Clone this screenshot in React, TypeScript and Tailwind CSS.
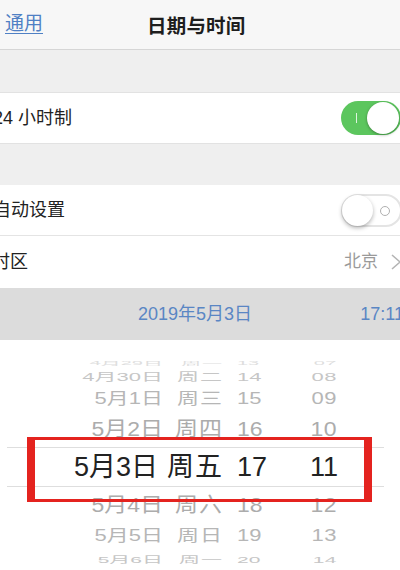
import React from "react";

const font = { fontFamily: '"Liberation Sans", "Noto Sans CJK SC", sans-serif' };

type WheelRow = {
  date: string;
  week: string;
  hour: string;
  min: string;
  h: string;
  text: string;
  squash: string;
};

const rows: WheelRow[] = [
  { date: "4月29日", week: "周一", hour: "13", min: "07", h: "h-[8px]", text: "text-[20px] text-[#dedede]", squash: "scale-y-[0.25]" },
  { date: "4月30日", week: "周二", hour: "14", min: "08", h: "h-[20px]", text: "text-[22px] text-[#c6c6c6]", squash: "scale-y-[0.5]" },
  { date: "5月1日", week: "周三", hour: "15", min: "09", h: "h-[24px]", text: "text-[22px] text-[#b6b6b6]", squash: "scale-y-[0.72]" },
  { date: "5月2日", week: "周四", hour: "16", min: "10", h: "h-[36px]", text: "text-[23px] text-[#acacac]", squash: "scale-y-[0.9]" },
];

const rowsBelow: WheelRow[] = [
  { date: "5月4日", week: "周六", hour: "18", min: "12", h: "h-[36px]", text: "text-[23px] text-[#acacac]", squash: "scale-y-[0.9]" },
  { date: "5月5日", week: "周日", hour: "19", min: "13", h: "h-[26px]", text: "text-[22px] text-[#b6b6b6]", squash: "scale-y-[0.72]" },
  { date: "5月6日", week: "周一", hour: "20", min: "14", h: "h-[20px]", text: "text-[21px] text-[#c6c6c6]", squash: "scale-y-[0.45]" },
];

const Row = ({ r }: { r: WheelRow }) => (
  <div className={`flex items-center ${r.h} ${r.text} leading-none`}>
    <div className={`flex items-center w-full ${r.squash}`}>
      <span className="w-[163px] text-right">{r.date}</span>
      <span className="w-[60px] text-right tracking-[1px]">{r.week}</span>
      <span className="ml-[14px] w-[40px]">{r.hour}</span>
      <span className="ml-[30px] w-[30px] text-right tracking-[0.5px]">{r.min}</span>
    </div>
  </div>
);

const App = () => {
  return (
    <div className="w-[400px] h-[570px] overflow-hidden bg-white relative" style={font}>
      {/* nav bar */}
      <div className="h-[50px] bg-[#f7f7f7] border-b border-b-[#d6d6d6] flex items-center relative">
        <span className="ml-[5px] text-[19px] text-[#4f80c4] underline underline-offset-[3px] decoration-[1px]">
          通用
        </span>
        <span className="absolute left-[147px] top-[12px] text-[19.5px] font-semibold text-[#1e1e1e] tracking-[0.2px]">
          日期与时间
        </span>
      </div>

      <div className="h-[43px] bg-[#efefef] border-b border-b-[#e2e2e2]" />

      <div className="h-[50px] flex items-center justify-between bg-white">
        <span className="-ml-[7px] text-[18px] text-[#222]">24 小时制</span>
        <div className="relative w-[60px] h-[34px] rounded-full bg-[#5cc65e] -mr-[1px]">
          <div className="absolute left-[15px] top-[12px] w-[1px] h-[10px] bg-white/80" />
          <div className="absolute right-[2px] top-[1px] w-[32px] h-[32px] rounded-full bg-white shadow-[0_1px_3px_rgba(0,0,0,0.35)]" />
        </div>
      </div>

      <div className="h-[42px] bg-[#efefef] border-t border-t-[#e2e2e2]" />

      <div className="h-[51px] flex items-center justify-between bg-white border-b border-b-[#e4e4e4]">
        <span className="-ml-[7px] text-[18px] text-[#222]">自动设置</span>
        <div className="relative w-[61px] h-[33px] rounded-full bg-white border-2 border-[#e4e4e4] -mr-[2px]">
          <div className="absolute right-[10px] top-[10px] w-[10px] h-[10px] rounded-full border-[1.5px] border-[#b0b0b0]" />
          <div className="absolute left-[-1px] top-[-1px] w-[31px] h-[31px] rounded-full bg-white shadow-[0_2px_4px_rgba(0,0,0,0.3)]" />
        </div>
      </div>

      <div className="h-[52px] flex items-center justify-between bg-white">
        <span className="-ml-[8px] text-[18px] text-[#222]">时区</span>
        <div className="flex items-center gap-[12px] text-[#9a9a9a]">
          <span className="text-[17px]">北京</span>
          <svg width="12" height="18" viewBox="0 0 12 18" className="-mr-[2px]">
            <path d="M2 2 L10 9 L2 16" fill="none" stroke="#b4b4b4" strokeWidth="1.6" />
          </svg>
        </div>
      </div>

      <div className="h-[52px] bg-[#dcdcdc] flex items-center text-[18px] text-[#5a86c4]">
        <span className="ml-[138px]">2019年5月3日</span>
        <span className="ml-auto -mr-[4px]">17:11</span>
      </div>

      {/* wheel picker */}
      <div className="pt-[19px] relative">
        {rows.map((r) => (
          <Row key={r.date} r={r} />
        ))}
        <div className="h-[40px] flex items-center text-[27px] text-[#222] leading-none border-y border-y-[#dedede] ml-[7px] mr-[16px]">
          <span className="w-[151px] text-right">5月3日</span>
          <span className="w-[65px] text-right tracking-[1px]">周五</span>
          <span className="ml-[14px] w-[40px]">17</span>
          <span className="ml-[31px] w-[30px] text-right">11</span>
        </div>
        {rowsBelow.map((r) => (
          <Row key={r.date} r={r} />
        ))}
      </div>

      {/* red annotation frame */}
      <div className="absolute left-[27px] top-[437px] w-[345px] h-[65px] border-x-[8px] border-y-[3px] border-[#e4231f]" />
    </div>
  );
};

export default App;
